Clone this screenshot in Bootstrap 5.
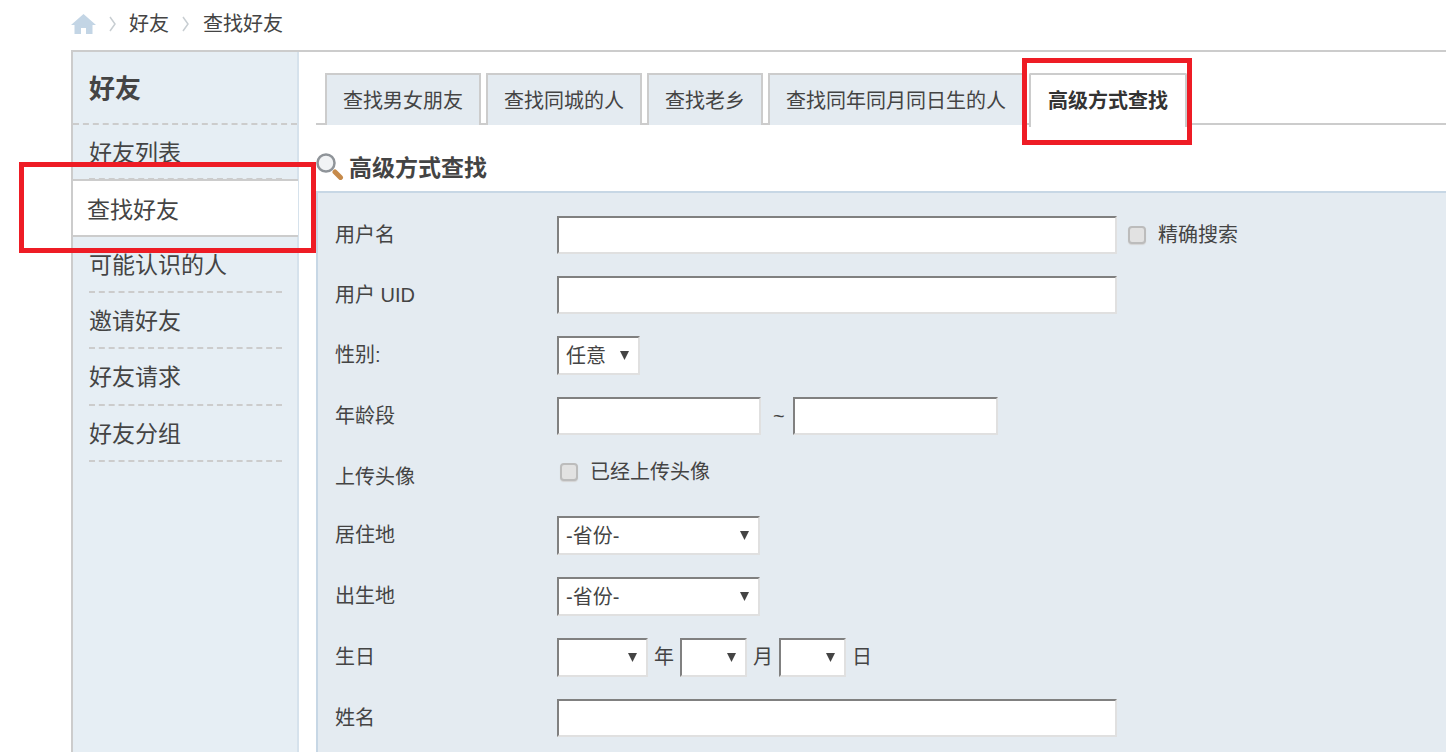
<!DOCTYPE html>
<html lang="zh-CN">
<head>
<meta charset="utf-8">
<title>查找好友</title>
<link rel="stylesheet" href="https://cdn.jsdelivr.net/npm/bootstrap@5.3.0/dist/css/bootstrap.min.css">
<style>
html,body{height:752px;overflow:hidden}
body{font-family:"Liberation Sans","Noto Sans CJK SC",sans-serif;color:#444;background:#fff;font-size:20px;line-height:1.2}
.canvas{position:relative;width:1446px;height:752px;overflow:hidden}
.crumbs{height:50px;padding:0 0 3px 71px;gap:12px;font-size:20px}
.crumb-sep{width:9px;height:18px;margin-top:1px}
.crumb-last{margin-left:1px}
.frame{margin-left:71px;height:702px;border-top:2px solid #ccc;border-left:2px solid #ccc}
.side{width:226px;flex:none;background:#e6eef4;border-right:2px solid #d6e2ec}
.side-title{height:73px;padding:21px 0 0 16px;font-size:26px;line-height:32px;font-weight:700;margin:0;border-bottom:2px dashed #ccc}
.side-item{display:block;height:56.5px;margin:0 15px 0 16px;padding-top:13px;font-size:23px;line-height:30px;color:#444;text-decoration:none;border-bottom:2px dashed #ccc}
.side-item.is-first{height:55px}
.side-item.is-third{padding-top:14px}
.side-item.is-on{height:58px;margin:0 -1px -2px 0;padding:14px 0 0 14px;background:#fff;border-top:2px solid #ccc;border-bottom:2px solid #ccc;position:relative;top:-1px}
.main-col{flex:1;min-width:0;padding:21px 0 0 17px}
.tabs{height:52px;gap:5px;padding-left:9px;border-bottom:2px solid #ccc}
.tab-i{height:52px;padding:0 16px;border:2px solid #ccc;border-bottom:0;background:#e4ebf1;font-size:20px;line-height:52px;color:#444;text-decoration:none;white-space:nowrap}
.tab-i.is-on{background:#fff;height:54px;font-weight:700;color:#333;border-radius:2px 2px 0 0;position:relative;padding:0 17px}
.sect-h{height:66px;margin:0;padding-top:28px;font-size:23px;line-height:30px;font-weight:700;gap:5px}
.panel{background:#e4ebf1;border-top:2px solid #c7d7e5;border-left:2px solid #c7d7e5;padding:23px 0 0 17px;height:600px}
.fld{height:61px;font-size:20px}
.fld.is-short{height:60px}
.fld.is-upload{height:58px}
.fld-l{width:222px;flex:none;padding-top:7px;line-height:24px}
.fld-c{height:38px}
.fld.is-upload .fld-c{height:28px}
.txt{display:block;height:38px;background:#fff;border:2px solid;border-color:#808080 #e0e0e0 #e0e0e0 #808080;padding:0 6px;border-radius:0;outline:0}
.t-lg{width:560px}
.t-sm{width:204px}
.t-sm2{width:205px}
.sel{appearance:none;-webkit-appearance:none;display:block;height:39px;background-color:#fff;background-image:url("data:image/svg+xml,%3Csvg xmlns='http://www.w3.org/2000/svg' width='9' height='9'%3E%3Cpath d='M0 0h9L4.500 9z' fill='%23444'/%3E%3C/svg%3E");background-repeat:no-repeat;background-position:right 9px center;border:2px solid;border-color:#808080 #e0e0e0 #e0e0e0 #808080;padding:2px 20px 0 7px;border-radius:0;color:#444;font:inherit;outline:0}
.s-gen{width:83px}
.s-prov{width:203px}
.s-y{width:91px}
.s-d{width:67px}
.ck{appearance:none;-webkit-appearance:none;width:18px;height:18px;margin:0;background:#e2e2e2;border:2px solid #bcbcbc;border-radius:4px;flex:none;box-shadow:0 1px 1px #d4d4d4}
.ck-a{margin:0 12px 0 11px}
.ck-b{margin:0 12px 0 3px}
.tilde{margin:0 8px 0 12px}
.unit{margin:0 6px}
.mark-red{position:absolute;border:5px solid #ee1c25;z-index:5}
.mark-a{left:19px;top:162px;width:297px;height:91px}
.mark-b{left:1022px;top:58px;width:170px;height:87px}
</style>
</head>
<body>
<div class="canvas">
  <nav class="crumbs d-flex align-items-center">
    <svg width="25" height="20" viewBox="0 0 25 20" aria-hidden="true"><path d="M12.500 0 25 11h-3.500v9H15v-6h-5v6H3.500v-9H0z" fill="#c3d5e5"/></svg>
    <svg class="crumb-sep" viewBox="0 0 9 18" aria-hidden="true"><path d="M2 2l5 7-5 7" fill="none" stroke="#c8ced2" stroke-width="1.500"/></svg>
    <span>好友</span>
    <svg class="crumb-sep" viewBox="0 0 9 18" aria-hidden="true"><path d="M2 2l5 7-5 7" fill="none" stroke="#c8ced2" stroke-width="1.500"/></svg>
    <span class="crumb-last">查找好友</span>
  </nav>
  <div class="frame d-flex">
    <aside class="side">
      <h2 class="side-title">好友</h2>
      <a class="side-item is-first" href="#">好友列表</a>
      <a class="side-item is-on" href="#">查找好友</a>
      <a class="side-item is-third" href="#">可能认识的人</a>
      <a class="side-item" href="#">邀请好友</a>
      <a class="side-item" href="#">好友请求</a>
      <a class="side-item" href="#">好友分组</a>
    </aside>
    <main class="main-col">
      <div class="tabs d-flex">
        <a class="tab-i" href="#">查找男女朋友</a>
        <a class="tab-i" href="#">查找同城的人</a>
        <a class="tab-i" href="#">查找老乡</a>
        <a class="tab-i" href="#">查找同年同月同日生的人</a>
        <a class="tab-i is-on" href="#">高级方式查找</a>
      </div>
      <h3 class="sect-h d-flex">
        <svg width="28" height="27" viewBox="0 0 28 27" aria-hidden="true"><path d="M19 19l5.500 5.500" stroke="#c68a4a" stroke-width="5" stroke-linecap="round"/><circle cx="10" cy="10" r="8.500" fill="#f1f3f5" stroke="#8f9499" stroke-width="2.500"/></svg>
        <span>高级方式查找</span>
      </h3>
      <form class="panel">
        <div class="fld is-short d-flex"><div class="fld-l">用户名</div><div class="fld-c d-flex align-items-center"><input class="txt t-lg" type="text"><input class="ck ck-a" type="checkbox"><span>精确搜索</span></div></div>
        <div class="fld is-short d-flex"><div class="fld-l">用户 UID</div><div class="fld-c d-flex align-items-center"><input class="txt t-lg" type="text"></div></div>
        <div class="fld d-flex"><div class="fld-l">性别:</div><div class="fld-c d-flex align-items-center"><select class="sel s-gen"><option>任意</option></select></div></div>
        <div class="fld d-flex"><div class="fld-l">年龄段</div><div class="fld-c d-flex align-items-center"><input class="txt t-sm" type="text"><span class="tilde">~</span><input class="txt t-sm2" type="text"></div></div>
        <div class="fld is-upload d-flex"><div class="fld-l">上传头像</div><div class="fld-c d-flex align-items-center"><input class="ck ck-b" type="checkbox"><span>已经上传头像</span></div></div>
        <div class="fld d-flex"><div class="fld-l">居住地</div><div class="fld-c d-flex align-items-center"><select class="sel s-prov"><option>-省份-</option></select></div></div>
        <div class="fld d-flex"><div class="fld-l">出生地</div><div class="fld-c d-flex align-items-center"><select class="sel s-prov"><option>-省份-</option></select></div></div>
        <div class="fld d-flex"><div class="fld-l">生日</div><div class="fld-c d-flex align-items-center"><select class="sel s-y"><option></option></select><span class="unit">年</span><select class="sel s-d"><option></option></select><span class="unit">月</span><select class="sel s-d"><option></option></select><span class="unit">日</span></div></div>
        <div class="fld d-flex"><div class="fld-l">姓名</div><div class="fld-c d-flex align-items-center"><input class="txt t-lg" type="text"></div></div>
      </form>
    </main>
  </div>
  <div class="mark-red mark-a"></div>
  <div class="mark-red mark-b"></div>
</div>
<script src="https://cdn.jsdelivr.net/npm/bootstrap@5.3.0/dist/js/bootstrap.bundle.min.js"></script>
</body>
</html>
